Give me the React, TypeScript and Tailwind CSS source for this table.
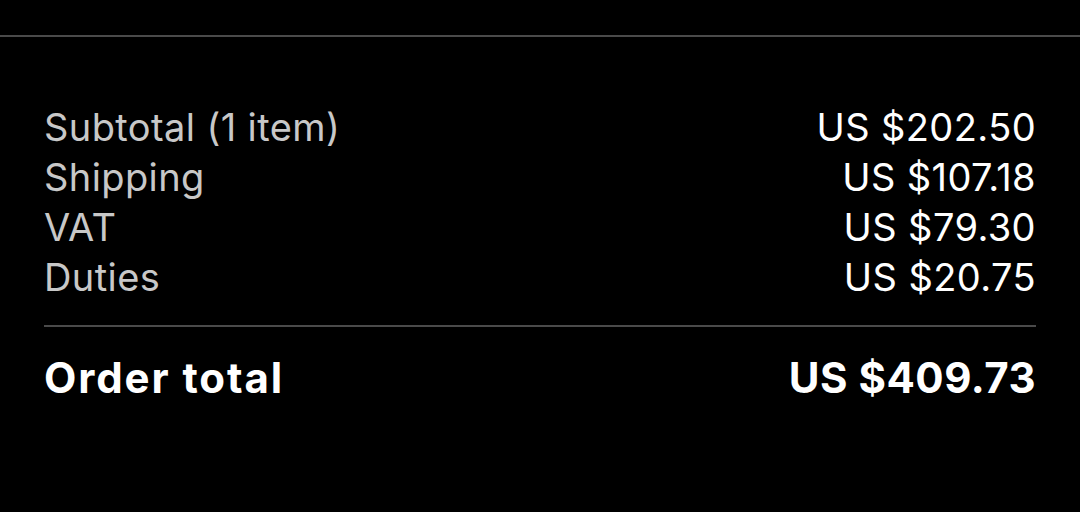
const rows = [
  { label: "Subtotal (1 item)", value: "US $202.50" },
  { label: "Shipping", value: "US $107.18" },
  { label: "VAT", value: "US $79.30" },
  { label: "Duties", value: "US $20.75" },
];

const App = () => {
  return (
    <div
      className="h-[512px] w-[1080px] overflow-hidden bg-black"
      style={{ fontFamily: "Inter, 'Noto Sans', sans-serif" }}
    >
      <div className="mt-[35px] h-[2px] bg-[#4a4a4a]" />

      <div className="px-[44px] pt-[65px]">
        {/* Summary rows */}
        <div className="flex flex-col">
          {rows.map((row) => (
            <div
              key={row.label}
              className="flex items-center justify-between text-[38px] leading-[50px] tracking-[0.4px]"
            >
              <span className="text-[#c8c8c8]">{row.label}</span>
              <span className="text-white">{row.value}</span>
            </div>
          ))}
        </div>

        <div className="mt-[23px] h-[2px] bg-[#4a4a4a]" />

        {/* Total */}
        <div className="mt-[26px] flex items-center justify-between text-[42px] font-bold leading-[50px] text-white">
          <span className="tracking-[1.9px]">Order total</span>
          <span className="tracking-[0.5px]">US $409.73</span>
        </div>
      </div>
    </div>
  );
};

export default App;
